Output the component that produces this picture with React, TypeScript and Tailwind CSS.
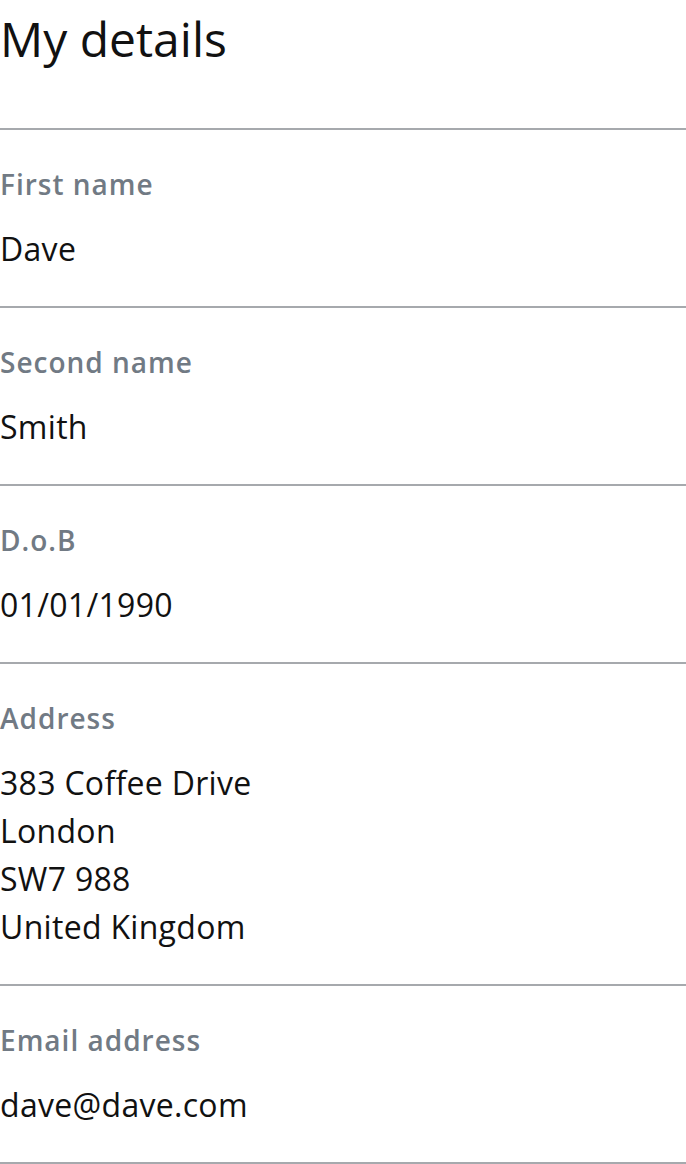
import React from "react";

const rows: { label: string; value: string[] }[] = [
  { label: "First name", value: ["Dave"] },
  { label: "Second name", value: ["Smith"] },
  { label: "D.o.B", value: ["01/01/1990"] },
  { label: "Address", value: ["383 Coffee Drive", "London", "SW7 988", "United Kingdom"] },
  { label: "Email address", value: ["dave@dave.com"] },
];

export default function App() {
  return (
    <div className="bg-white min-h-screen" style={{ fontFamily: '"Open Sans", sans-serif' }}>
      <h1 className="text-[48px] leading-[72px] text-[#111111] font-normal pt-[3px] pb-[53px]">My details</h1>
      <dl className="border-t-2 border-[#a6a9ad]">
        {rows.map((r) => (
          <div key={r.label} className="border-b-2 border-[#a6a9ad] pt-[36px] pb-[33px]">
            <dt className="text-[28px] leading-[36px] font-semibold tracking-[1px] text-[#717a84]">{r.label}</dt>
            <dd className="mt-[23px] text-[32px] leading-[48px] tracking-[0.3px] text-[#111111]">
              {r.value.map((v) => (
                <div key={v}>{v}</div>
              ))}
            </dd>
          </div>
        ))}
      </dl>
    </div>
  );
}
